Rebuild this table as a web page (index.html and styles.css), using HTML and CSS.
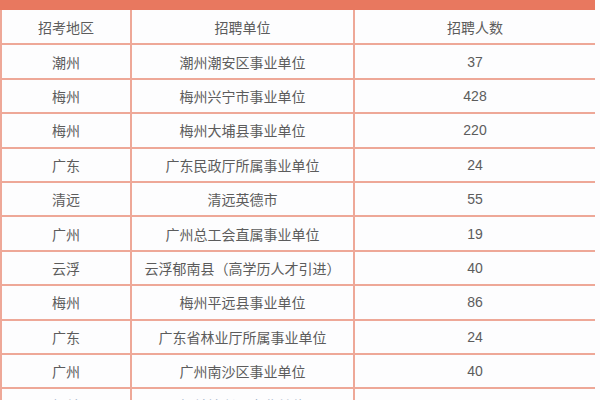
FILE: index.html
```html
<!DOCTYPE html>
<html lang="zh-CN">
<head>
<meta charset="utf-8">
<title>招聘人数</title>
<link rel="stylesheet" href="styles.css">
</head>
<body>
<div class="sheet">
  <div class="bar"><div class="title">2019年广东事业单位招聘人数一览表</div></div>
  <table class="grid">
    <colgroup>
      <col class="c1"><col class="c2"><col class="c3">
    </colgroup>
    <tr><td>招考地区</td><td>招聘单位</td><td>招聘人数</td></tr>
    <tr><td>潮州</td><td>潮州潮安区事业单位</td><td>37</td></tr>
    <tr><td>梅州</td><td>梅州兴宁市事业单位</td><td>428</td></tr>
    <tr><td>梅州</td><td>梅州大埔县事业单位</td><td>220</td></tr>
    <tr><td>广东</td><td>广东民政厅所属事业单位</td><td>24</td></tr>
    <tr><td>清远</td><td>清远英德市</td><td>55</td></tr>
    <tr><td>广州</td><td>广州总工会直属事业单位</td><td>19</td></tr>
    <tr><td>云浮</td><td>云浮郁南县（高学历人才引进）</td><td>40</td></tr>
    <tr><td>梅州</td><td>梅州平远县事业单位</td><td>86</td></tr>
    <tr><td>广东</td><td>广东省林业厅所属事业单位</td><td>24</td></tr>
    <tr><td>广州</td><td>广州南沙区事业单位</td><td>40</td></tr>
    <tr class="faded"><td>韶关</td><td>韶关始兴县事业单位</td><td>11</td></tr>
  </table>
</div>
</body>
</html>
```
FILE: styles.css
```css
html, body {
  margin: 0;
  padding: 0;
  background: #fdfdfe;
  overflow: hidden;
}
.sheet {
  width: 595px;
  height: 400px;
  overflow: hidden;
}
.bar {
  height: 10px;
  background: #e8785f;
  overflow: hidden;
  text-align: center;
}
.title {
  margin-top: -21px;
  font-family: "Noto Sans CJK SC", sans-serif;
  font-size: 16px;
  line-height: 20px;
  font-weight: bold;
  color: #f2b8a8;
}
.grid {
  width: 595px;
  border-collapse: collapse;
  table-layout: fixed;
  font-family: "Liberation Sans", "Noto Sans CJK SC", sans-serif;
  font-size: 14px;
  color: #5c5c5c;
}
.c1 { width: 130px; }
.c2 { width: 223px; }
.c3 { width: 242px; }
.grid tr {
  height: 34.4px;
}
.grid td {
  border: 2px solid #eea898;
  text-align: center;
  vertical-align: middle;
  padding: 0;
}
.grid tr:first-child td {
  border-top: none;
}
.faded td {
  color: #9db0c8;
}
```
